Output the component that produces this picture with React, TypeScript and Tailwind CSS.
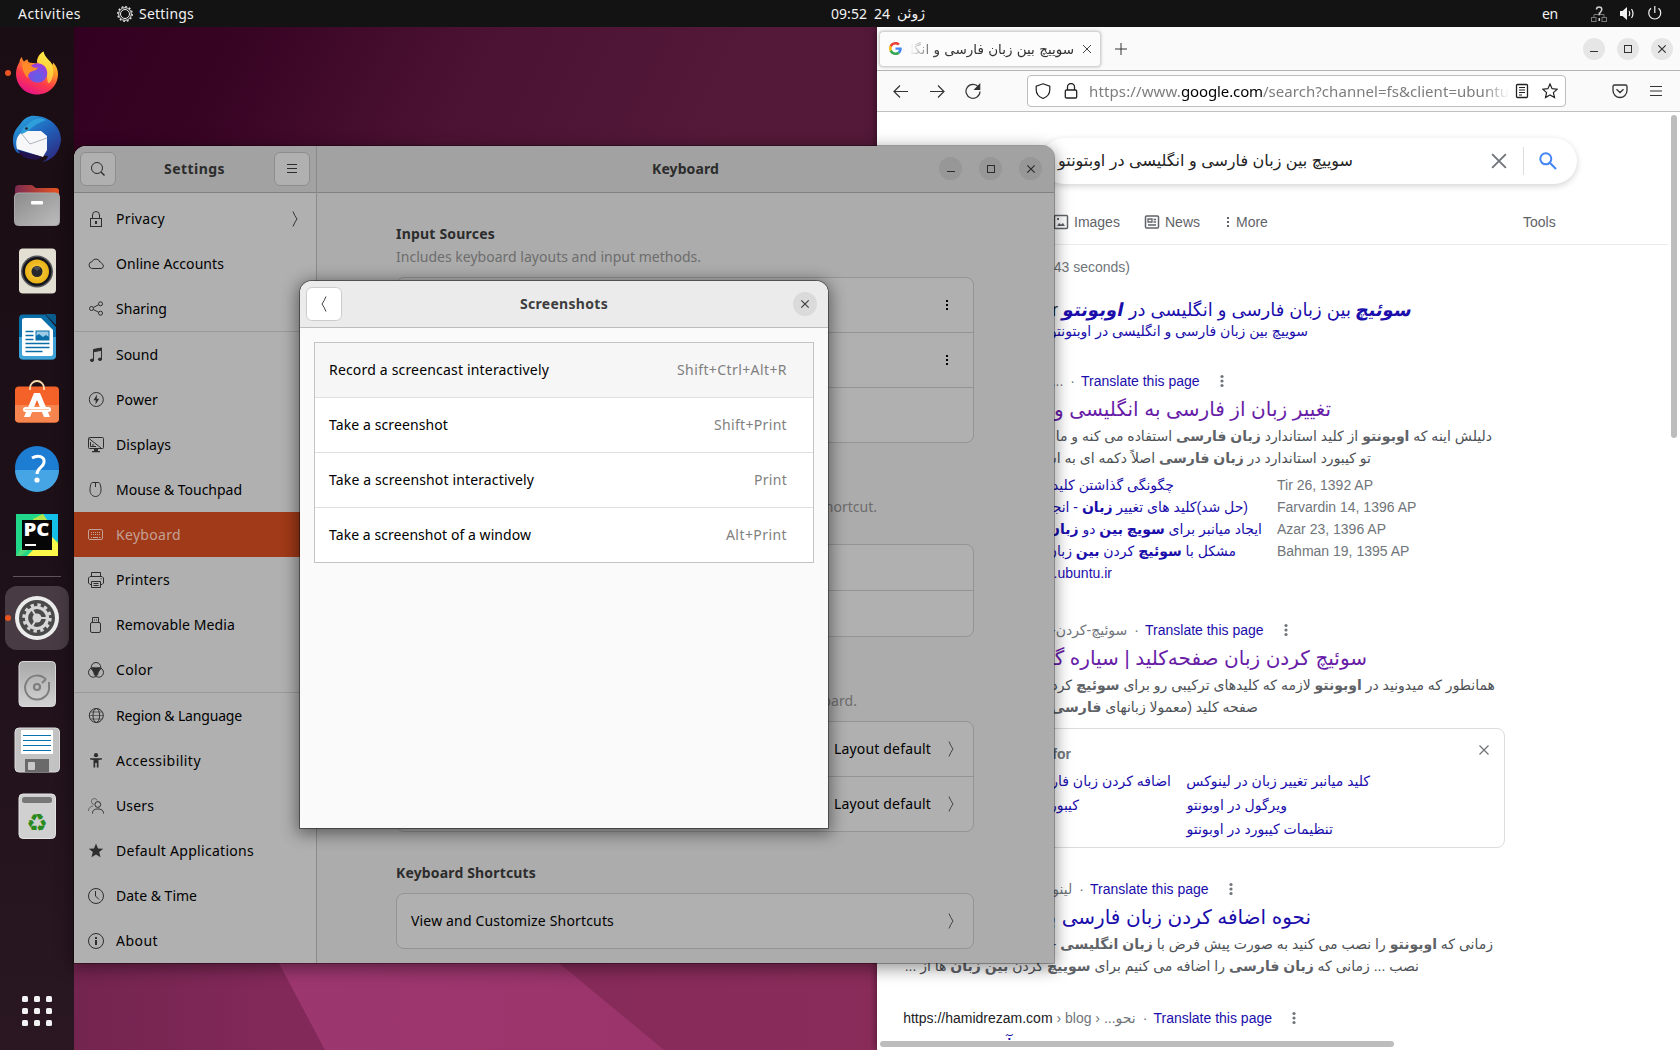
import React, { useLayoutEffect, useRef } from "react";

type FitProps = { w: number; className?: string; children: React.ReactNode };

/* Inline label whose tracking is adjusted so that it spans exactly w pixels. */
function Fit({ w, className = "", children }: FitProps) {
  const ref = useRef<HTMLSpanElement>(null);
  useLayoutEffect(() => {
    const el = ref.current;
    if (!el) return;
    el.style.letterSpacing = "0px";
    const n = (el.textContent || "").length;
    el.style.letterSpacing = (w - el.getBoundingClientRect().width) / n + "px";
  }, [w]);
  return (
    <span ref={ref} className={"inline-block shrink-0 whitespace-pre " + className}>
      {children}
    </span>
  );
}

/* ---------- small line icons (16px grid) ---------- */

function Line({ children, className = "size-4", sw = 1 }: { children: React.ReactNode; className?: string; sw?: number }) {
  return (
    <svg viewBox="0 0 16 16" className={"shrink-0 " + className} fill="none" stroke="currentColor" strokeWidth={sw}>
      {children}
    </svg>
  );
}

const Chevron = ({ flip = false }: { flip?: boolean }) => (
  <svg viewBox="0 0 8 16" className={flip ? "h-4 w-2 -scale-x-100" : "h-4 w-2"} fill="none" stroke="currentColor" strokeWidth="1">
    <path d="M2 .5Q3.500 4.500 6 8Q3.500 11.500 2 15.500" />
  </svg>
);

const Dots = () => (
  <svg viewBox="0 0 4 12" className="h-3 w-1 shrink-0" fill="currentColor" shapeRendering="crispEdges">
    <rect x="1" y="1" width="2" height="2" />
    <rect x="1" y="5" width="2" height="2" />
    <rect x="1" y="9" width="2" height="2" />
  </svg>
);

const RoundDots = () => (
  <svg viewBox="0 0 4 14" className="h-[14px] w-1 shrink-0 text-[#70757a]" fill="currentColor">
    <circle cx="2" cy="2.500" r="1.600" />
    <circle cx="2" cy="7" r="1.600" />
    <circle cx="2" cy="11.500" r="1.600" />
  </svg>
);

const MinGlyph = () => <Line><path d="M4 10.500h8" /></Line>;
const MaxGlyph = () => <Line><rect x="4.500" y="4.500" width="7" height="7" /></Line>;
const CloseGlyph = () => <Line sw={1.2}><path d="M4.300 4.300l7.400 7.400M11.700 4.300l-7.400 7.400" /></Line>;

const icons: Record<string, React.ReactNode> = {
  Privacy: (
    <Line>
      <rect x="2.500" y="7.500" width="11" height="8" />
      <path d="M4.500 7.500V4a3.500 3.500 0 0 1 7 0v3.500" />
      <path d="M8 10v3" strokeWidth="2" />
    </Line>
  ),
  "Online Accounts": (
    <Line>
      <path d="M3.800 12.500H13a2.500 2.500 0 0 0 .9-4.800C13.500 6.500 12.600 6 11.800 6A4 4 0 0 0 4.200 5.600 3.500 3.500 0 0 0 3.800 12.500z" />
    </Line>
  ),
  Sharing: (
    <Line>
      <circle cx="3.500" cy="7.500" r="2" />
      <circle cx="12.500" cy="2.800" r="2" />
      <circle cx="12.500" cy="12.200" r="2" />
      <path d="M5.300 6.500l5.400-2.800M5.300 8.500l5.400 2.800" />
    </Line>
  ),
  Sound: (
    <Line>
      <path d="M5.500 13V2.500L13.500 1v11" />
      <path d="M5.500 2.800l8-1.500v2l-8 1.500z" fill="currentColor" />
      <ellipse cx="4" cy="13.300" rx="1.600" ry="1.200" fill="currentColor" />
      <ellipse cx="12" cy="12.300" rx="1.600" ry="1.200" fill="currentColor" />
    </Line>
  ),
  Power: (
    <Line>
      <circle cx="8.300" cy="7.500" r="7" />
      <path d="M9 2.500L5.500 8.300h2.300L7.500 12.500l3.700-5.800H8.700z" fill="currentColor" stroke="none" />
    </Line>
  ),
  Displays: (
    <Line>
      <rect x="0.500" y="0.500" width="15" height="11" rx="1" />
      <path d="M1 1.500l12 9.500M2.500 5v4.500h5.500M4 8h2" />
      <path d="M6 12h4v2h2v1.200H4V14h2z" fill="currentColor" stroke="none" />
    </Line>
  ),
  "Mouse & Touchpad": (
    <Line>
      <path d="M4.300 .5h6.400c1.200 0 2.300 3.500 2.300 7.500 0 3.500-2 6.500-5.500 6.500S2 11.500 2 8C2 4 3.100.5 4.300.5zM7.500 .5V5" />
    </Line>
  ),
  Keyboard: (
    <Line>
      <rect x="0.500" y="2.500" width="14" height="10" rx="1.500" />
      <path d="M3 5.500h10M3 7.500h10" strokeDasharray="1 1" />
      <path d="M3 10.500h1M5 10.500h5M11 10.500h1.500" />
    </Line>
  ),
  Printers: (
    <Line>
      <path d="M3.500 4.500v-4h9v4M3.500 12.500H2L.5 11V6L2 4.500h12L15.500 6v5L14 12.500h-1.500" />
      <path d="M3.500 9.500v6h9v-6zM5.500 11.500h5M5.500 13.500h5" />
      <path d="M12.500 6.800h1" />
    </Line>
  ),
  "Removable Media": (
    <Line>
      <rect x="2.500" y="5.500" width="10" height="10" rx="1.500" />
      <path d="M4.500 5.500v-5h6v5M6 3h1M8 3h1" />
    </Line>
  ),
  Color: (
    <Line>
      <circle cx="8" cy="5.300" r="4.800" />
      <circle cx="5.300" cy="10.400" r="4.800" />
      <circle cx="10.700" cy="10.400" r="4.800" />
      <path d="M3.800 6.200c2-1 6.400-1 8.400 0-.3 2-1 3-1.800 3.800-.3 2-1.200 3.300-2.400 4-1.200-.7-2.100-2-2.400-4-.8-.8-1.500-1.800-1.800-3.800z" fill="currentColor" stroke="none" />
    </Line>
  ),
  "Region & Language": (
    <Line>
      <circle cx="8.300" cy="7.500" r="7" />
      <ellipse cx="8.300" cy="7.500" rx="3.300" ry="7" />
      <path d="M1.300 7.500h14M2.500 4h11.600M2.500 11h11.600" strokeWidth=".6" />
    </Line>
  ),
  Accessibility: (
    <svg viewBox="0 0 16 16" className="size-4 shrink-0" fill="currentColor">
      <circle cx="8" cy="2.200" r="2.100" />
      <path d="M2 5.200h12v1.200l-3.500.6v7.500H8.800V10H7.200v4.500H5.500V7L2 6.400z" />
    </svg>
  ),
  Users: (
    <Line>
      <g opacity=".55"><path d="M6 6.500a3 3 0 1 1 3.200-4M.5 13C.5 10 2 8.500 5 8" /></g>
      <circle cx="9.800" cy="6.500" r="2.900" />
      <path d="M4.500 15.500c0-3.500 2-4.500 5.300-4.500s5.700 1 5.700 4.500" />
    </Line>
  ),
  "Default Applications": (
    <svg viewBox="0 0 16 16" className="size-4 shrink-0" fill="currentColor">
      <path d="M8 .5l2 4.900 5.200.3-4 3.400 1.300 5.100L8 11.400l-4.500 2.800 1.300-5.100L.8 5.700 6 5.400z" />
    </svg>
  ),
  "Date & Time": (
    <Line>
      <circle cx="8" cy="8" r="7.500" />
      <path d="M7.500 3v5l3.500 3.500" />
    </Line>
  ),
  About: (
    <Line>
      <circle cx="8" cy="8" r="7.500" />
      <path d="M8 4v2M8 7v5" strokeWidth="2" />
    </Line>
  ),
};

const groups: [string, number][][] = [
  [["Privacy", 49], ["Online Accounts", 108], ["Sharing", 51]],
  [["Sound", 42], ["Power", 42], ["Displays", 55], ["Mouse & Touchpad", 126], ["Keyboard", 65], ["Printers", 54], ["Removable Media", 119], ["Color", 37]],
  [["Region & Language", 126], ["Accessibility", 85], ["Users", 38], ["Default Applications", 138], ["Date & Time", 81], ["About", 42]],
];

/* ---------- top bar ---------- */

function TopBar() {
  return (
    <header className="relative z-10 flex h-[27px] items-center bg-[#131313] pr-[17px] pl-[18px] text-[14px] text-[#f2f2f2]">
      <Fit w={63}>Activities</Fit>
      <svg viewBox="0 0 16 16" className="ml-9 size-4 text-[#f2f2f2]" fill="none" stroke="currentColor">
        <circle cx="8" cy="8" r="6.300" strokeWidth="1" />
        <circle cx="8" cy="8" r="7.300" strokeWidth="1.200" strokeDasharray="1.900 1.922" />
        <circle cx="8" cy="8" r="4.500" strokeWidth="1" />
      </svg>
      <Fit w={55} className="ml-[6px]">Settings</Fit>
      <div className="ml-[637px] flex items-center">
        <Fit w={36}>09:52</Fit>
        <Fit w={16} className="ml-[7px]">24</Fit>
        <span dir="rtl" className="ml-[5px] w-[30px] whitespace-nowrap font-['DejaVu_Sans'] text-[14px]">ژوئن</span>
      </div>
      <Fit w={16} className="ml-auto">en</Fit>
      <svg viewBox="0 0 16 16" className="ml-[33px] size-4" fill="none" stroke="#777">
        <path d="M8 6v4M3 11.500V8.500h10v3" />
        <rect x="0.500" y="11.500" width="4.500" height="4" />
        <rect x="11" y="11.500" width="4.500" height="4" />
        <path d="M5.500 3.500C5.500.3 10.800.3 10.800 3.500c0 2.300-2.500 2.300-2.500 5.500M8.300 12v3" stroke="#cfcfcf" strokeWidth="1.500" />
      </svg>
      <svg viewBox="0 0 16 16" className="ml-3 size-4" fill="none" stroke="#f2f2f2">
        <path d="M1 5h2.500L8 1v13L3.500 10H1z" fill="#f2f2f2" stroke="none" />
        <path d="M10 5q1.500 2.500 0 5M12.500 3q3 4.500 0 9" strokeWidth="1.200" />
      </svg>
      <svg viewBox="0 0 16 16" className="ml-3 size-4" fill="none" stroke="#f2f2f2" strokeWidth="1.200">
        <path d="M4 2.300a6 6 0 1 0 7.500 0M7.800 0v7" />
      </svg>
    </header>
  );
}

/* ---------- dock ---------- */

const Svg48 = ({ children }: { children: React.ReactNode }) => (
  <svg viewBox="0 0 48 48" className="size-12">{children}</svg>
);

const dockIcons: React.ReactNode[] = [
  <Svg48 key="firefox">
    <defs>
      <linearGradient id="ffA" x1=".8" y1="0" x2=".3" y2="1">
        <stop offset="0" stopColor="#fff44f" />
        <stop offset=".35" stopColor="#ff9a24" />
        <stop offset=".65" stopColor="#ff3d47" />
        <stop offset="1" stopColor="#e6128a" />
      </linearGradient>
      <radialGradient id="ffB" cx=".5" cy=".7" r=".7">
        <stop offset="0" stopColor="#5a63e8" />
        <stop offset="1" stopColor="#a33adb" />
      </radialGradient>
    </defs>
    <path d="M24 45.500C12 45.500 3 36 3 24.500c0-5 2-9 3.500-11.500 0-2.500 1.500-4 2.500-5 0 2 .8 3.200 2 4.500 1.500-1.200 2.600-2.500 3.500-2 .3 1.500.7 2 1.500 3l8 1C23.500 9.500 26 5 30.500 2.500c1 4.500 3 6 5.500 9 2 2 3 3 3.500 4.500.5-1 .6-1.700.6-2.500C43.500 17 45 21 45 25c0 12-9.500 20.500-21 20.500z" fill="url(#ffA)" />
    <path d="M30.500 2.500c1 4.500 3 6 5.500 9 4.500 5 6.500 14 1 22-4 3-2-8-4-13l-9-8C25 8.500 27 5 30.500 2.500z" fill="#fff04a" opacity=".65" />
    <circle cx="24.500" cy="24" r="9.800" fill="url(#ffB)" />
    <path d="M9 14c3 0 5 0 8 1.500 2.500 3.500 5 3.500 8 3-1 2.500-3 3-5 3.500-4 1-5.500 4-4.500 7.500C11 26 9 20 9 14z" fill="#ff8a2a" />
  </Svg48>,
  <Svg48 key="thunderbird">
    <defs>
      <linearGradient id="tb" x1="0" y1="0" x2=".7" y2="1">
        <stop offset="0" stopColor="#2caee2" />
        <stop offset=".5" stopColor="#1f66be" />
        <stop offset="1" stopColor="#2d2f86" />
      </linearGradient>
    </defs>
    <path d="M8 8C12 2 18 0 23 1c10 0 25 8 25 24-1 12-9 21-19 22 4-2 5-3 6-6L5 38C-1 34-2 20 4 13z" fill="url(#tb)" />
    <path d="M13 16h15l6 5v14l-4 7L4 34C2 26 4 21 8 18z" fill="#f7f7f9" />
    <path d="M5 35l24 7-3 2C15 46 8 42 5 35z" fill="#22134f" />
    <path d="M8 18l9 11 17-6" fill="none" stroke="#aeb3bb" />
    <path d="M14 10c5-6 12-8 19-5-6 2-12 5-18 11-3 1-5 3-7 3 0-4 2-7 6-9z" fill="#2f9fdc" />
    <circle cx="13.500" cy="13.500" r="1.300" fill="#222" />
  </Svg48>,
  <Svg48 key="files">
    <defs>
      <linearGradient id="flA"><stop offset="0" stopColor="#7a2a50" /><stop offset="1" stopColor="#e95420" /></linearGradient>
      <linearGradient id="flB" x1="0" y1="0" x2="1" y2="1"><stop offset="0" stopColor="#8b8b8b" /><stop offset="1" stopColor="#bdbdbd" /></linearGradient>
    </defs>
    <path d="M2 8q0-4 4-4h12q2 0 3 1.500T24 7h19q3 0 3 3v10H2z" fill="url(#flA)" />
    <rect x="1.500" y="12" width="45" height="32.500" rx="4" fill="url(#flB)" stroke="#a9a9a9" />
    <rect x="18" y="20" width="12" height="3.500" rx="1" fill="#fff" />
  </Svg48>,
  <Svg48 key="rhythmbox">
    <defs><radialGradient id="rb"><stop offset="0" stopColor="#f9d24a" /><stop offset="1" stopColor="#e9b115" /></radialGradient></defs>
    <rect x="6" y="1.500" width="37" height="45" rx="4" fill="#e3dfd3" />
    <circle cx="24" cy="24.500" r="16" fill="#55555a" />
    <circle cx="24" cy="24.500" r="14.500" fill="#14141c" />
    <circle cx="24" cy="24.500" r="12" fill="url(#rb)" />
    <circle cx="24" cy="24.500" r="5.500" fill="#26282b" />
    <path d="M20 21a5.500 5.500 0 0 1 8 0l-4 3z" fill="#4b4e52" />
  </Svg48>,
  <Svg48 key="writer">
    <path d="M10 1.500h22L43 14v28.500q0 4-4 4H10q-4 0-4-4v-37q0-4 4-4z" fill="#0a6ea8" />
    <path d="M6 24h37v18.500q0 4-4 4H10q-4 0-4-4z" fill="#3fa3d8" />
    <path d="M12 5h16L40 17v24q0 2-2 2H11q-2 0-2-2V7q0-2 3-2z" fill="#fff" />
    <path d="M32 1h9q2 0 2 2v9z" fill="#0a5c8c" />
    <rect x="23" y="18" width="13" height="9" fill="#9ccbe6" stroke="#0a6ea8" />
    <path d="M23 27v-4l3-2 4 3 3-2 3 2v3z" fill="#0a6ea8" />
    <path d="M12.500 18.500h8M12.500 22.500h8M12.500 26.500h8M12.500 30.500h24M12.500 34.500h24M12.500 38.500h17" stroke="#0a6ea8" strokeWidth="1.600" />
  </Svg48>,
  <Svg48 key="software">
    <rect x="2" y="7.500" width="44" height="36" rx="4" fill="#f4622a" />
    <path d="M2 26h44v13.500q0 4-4 4H6q-4 0-4-4z" fill="#f6854f" />
    <path d="M17 11V9a7 7 0 0 1 14 0v2" fill="none" stroke="#fcdcae" strokeWidth="1.800" />
    <path d="M21 14h6l10 24h-6l-7-17-7 17h-6z" fill="#fff" />
    <rect x="10" y="28" width="28" height="5" rx="2.500" fill="#fff" />
    <path d="M12 30.500h24" stroke="#f6b18e" strokeWidth=".7" />
  </Svg48>,
  <Svg48 key="help">
    <circle cx="24" cy="23" r="22" fill="#1d7dd2" />
    <path d="M2 25a22 22 0 0 0 44 0z" fill="#46a5e4" />
    <path d="M19 13c6-3.500 13-1.500 12 4.500-.7 5-7 5-7 11.500" fill="none" stroke="#fff" strokeWidth="3" />
    <circle cx="24" cy="35" r="2.600" fill="#fff" />
  </Svg48>,
  <Svg48 key="pycharm">
    <rect x="3" y="3" width="42" height="42" fill="#21d789" />
    <path d="M30 3h15v26l-20 6z" fill="#14bfe8" />
    <path d="M3 45L30 3l5 10-10 18L8 45z" fill="#4fdc7c" />
    <path d="M20 8l10-5 5 7v20H20z" fill="#b8e64a" />
    <path d="M14 45l22-22 9 9v13z" fill="#fcf84a" />
    <rect x="9" y="9" width="30" height="30" fill="#060606" />
    <text x="10.500" y="25" fontSize="18" fontWeight="800" fill="#fff" fontFamily="Open Sans, sans-serif" textLength="26" lengthAdjust="spacingAndGlyphs">PC</text>
    <rect x="12" y="33" width="11" height="2" fill="#fff" />
  </Svg48>,
];

const runningIcons: React.ReactNode[] = [
  <Svg48 key="settings">
    <circle cx="24" cy="24" r="22" fill="#ececec" />
    <circle cx="24" cy="24" r="18" fill="#4a4a4a" />
    <circle cx="24" cy="24" r="13.200" fill="none" stroke="#d6d6d6" strokeWidth="3" strokeDasharray="3.400 3.510" />
    <circle cx="24" cy="24" r="10.500" fill="none" stroke="#d6d6d6" strokeWidth="3.200" />
    <circle cx="24" cy="24" r="4.500" fill="#d6d6d6" />
    <path d="M24 24h9M24 24l-5-8.500M24 24l-5 8.500" stroke="#d6d6d6" strokeWidth="2" />
  </Svg48>,
  <Svg48 key="disk">
    <defs><linearGradient id="dk" x1="0" y1="0" x2="0" y2="1"><stop offset="0" stopColor="#a8a8a8" /><stop offset="1" stopColor="#d2d2d2" /></linearGradient></defs>
    <rect x="6" y="1.500" width="36.500" height="45" rx="4" fill="url(#dk)" stroke="#d8d8d8" />
    <path d="M33 19.500A12 12 0 1 0 36 26V22M33 19l-4 4" fill="none" stroke="#7e7e7e" strokeWidth="2" />
    <circle cx="24" cy="27" r="3" fill="none" stroke="#7e7e7e" strokeWidth="2.200" />
  </Svg48>,
  <Svg48 key="floppy">
    <rect x="2" y="2" width="44.500" height="44" rx="4" fill="#c3c3c3" stroke="#ddd" />
    <rect x="8" y="4" width="32" height="24" rx="1" fill="#fff" />
    <path d="M10 9.500h28M10 14.500h28M10 19.500h28M10 24.500h28" stroke="#0a72ae" strokeWidth="1" />
    <path d="M12 33h24v13H12z" fill="#6a6a6a" />
    <rect x="15" y="36" width="7" height="8" rx="1" fill="#c9c9c9" />
  </Svg48>,
  <Svg48 key="trash">
    <rect x="6" y="2" width="36.500" height="44.500" rx="4" fill="#d0d0d0" stroke="#e4e4e4" />
    <rect x="9" y="5" width="30" height="6" rx="2.500" fill="#777" />
    <text x="24" y="38.500" textAnchor="middle" fontSize="24" fill="#2a8a1e" fontFamily="DejaVu Sans, sans-serif">♻</text>
  </Svg48>,
];

function DockSlot({ children, running = false, active = false }: { children: React.ReactNode; running?: boolean; active?: boolean }) {
  return (
    <div className="relative flex h-[66px] items-center justify-center">
      <div className={"flex size-16 items-center justify-center rounded-[12px] " + (active ? "bg-[#493b43]" : "")}>{children}</div>
      {running && <span className="absolute top-[30px] left-[5px] size-[6px] rounded-full bg-[#e95420]" />}
    </div>
  );
}

function Dock() {
  return (
    <nav className="flex w-[74px] shrink-0 flex-col bg-linear-to-b from-[#1a0d13] via-[#1d1018] to-[#2a1721] pt-[13px]">
      {dockIcons.map((icon, i) => (
        <DockSlot key={i} running={i === 0}>{icon}</DockSlot>
      ))}
      <div className="flex h-[17px] items-center justify-center"><div className="h-px w-12 bg-[#5e555a]" /></div>
      {runningIcons.map((icon, i) => (
        <DockSlot key={i} running={i === 0} active={i === 0}>{icon}</DockSlot>
      ))}
      <div className="mx-auto mt-[147px] grid grid-cols-3 gap-[6px]">
        {Array.from({ length: 9 }, (_, i) => (
          <span key={i} className="size-[6px] rounded-[1.500px] bg-[#f2f2f2]" />
        ))}
      </div>
    </nav>
  );
}

/* ---------- browser ---------- */

const Fa = ({ children, className = "" }: { children: React.ReactNode; className?: string }) => (
  <span dir="rtl" className={"shrink-0 whitespace-nowrap " + className}>{children}</span>
);

/* Bold slanted word; the slant is applied to the upright bold face. */
const Slanted = ({ children }: { children: React.ReactNode }) => (
  <em className="inline-block -skew-x-12 font-bold not-italic">{children}</em>
);

/* A line of the results column; its content ends at the given width. */
function ResultLine({ children, className }: { children: React.ReactNode; className: string }) {
  return <div className={"flex h-[22px] shrink-0 items-center justify-end whitespace-nowrap " + className}>{children}</div>;
}

const Translate = () => (
  <>
    <span className="pr-[6px] pl-[7px]">·</span>
    <span className="w-[119px] text-[#1a0dab]">Translate this page</span>
    <span className="ml-[20px] flex"><RoundDots /></span>
  </>
);

function RoundButton({ children, className }: { children: React.ReactNode; className: string }) {
  return <span className={"flex items-center justify-center rounded-full " + className}>{children}</span>;
}

function Browser() {
  return (
    <section className="absolute top-[27px] left-[877px] flex h-[1023px] w-[803px] flex-col overflow-hidden bg-white shadow-[0_0_8px_rgba(0,0,0,0.5)]">
      <div className="flex h-[44px] shrink-0 items-center border-b border-[#b4b4b4] bg-[#fafafa] pr-[7px] pl-[2px]">
        <div className="flex h-[36px] w-[222px] items-center rounded-[4px] border border-[#d4d4d4] bg-[#fcfcfc] px-[9px] shadow-[0_0_3px_rgba(0,0,0,0.25)]">
          <svg viewBox="0 0 48 48" className="size-[13px] shrink-0">
            <path fill="#EA4335" d="M24 9.500c3.540 0 6.710 1.220 9.210 3.600l6.850-6.850C35.900 2.380 30.470 0 24 0 14.620 0 6.510 5.380 2.560 13.220l7.980 6.190C12.430 13.720 17.740 9.500 24 9.500z" />
            <path fill="#4285F4" d="M46.980 24.550c0-1.570-.15-3.090-.38-4.550H24v9.020h12.940c-.58 2.960-2.260 5.480-4.780 7.180l7.730 6c4.510-4.180 7.090-10.360 7.090-17.650z" />
            <path fill="#FBBC05" d="M10.530 28.590c-.48-1.450-.76-2.990-.76-4.590s.27-3.140.76-4.590l-7.980-6.190C.92 16.460 0 20.120 0 24c0 3.880.92 7.540 2.560 10.780l7.970-6.190z" />
            <path fill="#34A853" d="M24 48c6.480 0 11.930-2.130 15.890-5.810l-7.730-6c-2.150 1.450-4.920 2.300-8.160 2.300-6.260 0-11.570-4.220-13.470-9.910l-7.980 6.190C6.510 42.620 14.620 48 24 48z" />
          </svg>
          <div className="mt-[2px] ml-2 flex w-[164px] shrink-0 justify-start overflow-hidden text-[13px] text-[#333] [direction:rtl] [mask-image:linear-gradient(to_right,transparent,black_28px)]">
            <Fa className="font-['DejaVu_Sans'] text-[13.500px]">سوییچ بین زبان فارسی و انگلیسی</Fa>
          </div>
          <span className="ml-[5px] text-[#444]"><Line className="size-4"><path d="M4 4l8 8M12 4l-8 8" /></Line></span>
        </div>
        <span className="mt-[1px] ml-[12px] text-[#333]"><Line className="size-4"><path d="M8 2v12M2 8h12" /></Line></span>
        <div className="ml-auto flex gap-3 pt-px text-[#333]">
          <RoundButton className="size-[22px] bg-[#e6e6e6]"><MinGlyph /></RoundButton>
          <RoundButton className="size-[22px] bg-[#e6e6e6]"><MaxGlyph /></RoundButton>
          <RoundButton className="size-[22px] bg-[#e6e6e6]"><CloseGlyph /></RoundButton>
        </div>
      </div>
      <div className="flex h-[41px] shrink-0 items-center border-b border-[#c0c0c0] bg-[#fafafa] pr-[16px] pl-4 text-[#333]">
        <Line sw={1.2}><path d="M1 8.500h14M7 2.500L1 8.500l6 6" /></Line>
        <span className="ml-5"><Line sw={1.2}><path d="M1 8.500h14M9 2.500l6 6-6 6" /></Line></span>
        <span className="ml-5"><Line sw={1.2}><path d="M13.500 4A7 7 0 1 0 15 8.500" /><path d="M14.700 1.500v4.800h-4.800z" fill="currentColor" /></Line></span>
        <div className="ml-[46px] flex h-8 w-[539px] items-center rounded-[4px] border border-[#bdbdbd] bg-white pr-[6px] pl-[7px] text-[#222]">
          <Line sw={1.2}><path d="M8 .8l6.800 2.400v3.600C14.800 11 12 14 8 15.500 4 14 1.200 11 1.200 6.800V3.200z" /></Line>
          <span className="ml-3"><Line sw={1.3}><rect x="2.300" y="7" width="11.400" height="8" rx="1.200" /><path d="M4.500 7V4a3.500 3.500 0 0 1 7 0v3" /></Line></span>
          <div className="ml-[10px] w-[420px] overflow-hidden text-[15px] whitespace-nowrap text-[#7d7d7d] [mask-image:linear-gradient(to_left,transparent,black_24px)]">
            <Fit w={92}>https://www.</Fit>
            <Fit w={82} className="text-black">google.com</Fit>
            <Fit w={246}>/search?channel=fs&amp;client=ubuntu</Fit>
          </div>
          <span className="ml-[5px]"><Line sw={1.3}><rect x="2.500" y="1.500" width="11" height="13" rx="1" /><path d="M5 4.500h6M5 7h6M5 9.500h6M5 12h3" strokeWidth="1" /></Line></span>
          <span className="ml-3"><Line sw={1.2}><path d="M8 1l2.100 4.700 5.100.5-3.800 3.400 1.100 5L8 12l-4.500 2.600 1.100-5L.8 6.200l5.100-.5z" /></Line></span>
        </div>
        <span className="ml-auto"><Line sw={1.3}><path d="M2.500 2h11q1.500 0 1.500 1.500V7.500a7 7 0 0 1-14 0V3.500Q1 2 2.500 2zM4.500 6.200L8 9.500l3.500-3.300" /></Line></span>
        <span className="ml-5"><Line sw={1.2}><path d="M2 3.500h12M2 8h12M2 12.500h12" /></Line></span>
      </div>

      <div className="flex min-h-0 flex-1 font-['Liberation_Sans','DejaVu_Sans',sans-serif] text-[14px] leading-[22px] text-[#70757a]">
        <main className="flex h-[928px] w-[791px] flex-col overflow-hidden pl-[29px]">
          <div className="mt-[26px] ml-[135px] flex h-[46px] w-[536px] shrink-0 items-center rounded-full bg-white pl-[17px] text-[16px] text-[#222] shadow-[0_2px_6px_rgba(32,33,36,0.2)]">
            <Fa className="w-[295px]">سوییچ بین زبان فارسی و انگلیسی در اوبتونتو</Fa>
            <span className="ml-[136px] text-[#70757a]"><Line className="size-[20px]" sw={1.5}><path d="M2.500 2.500l11 11M13.500 2.500l-11 11" /></Line></span>
            <span className="ml-[14px] h-7 w-px bg-[#dadce0]" />
            <svg viewBox="0 0 18 18" className="ml-[15px] size-[18px]" fill="none" stroke="#4285f4" strokeWidth="2">
              <circle cx="6.800" cy="6.800" r="5.500" />
              <path d="M10.800 10.800l6.200 6.200" />
            </svg>
          </div>
          <div className="mt-[27px] flex h-[22px] shrink-0 items-center pl-[147px] text-[#5f6368]">
            <Line sw={1.5}><rect x="1.500" y="1.500" width="13" height="13" rx="1" /><path d="M4 12l2-3 2 1.500L10 9l2 3z" fill="currentColor" stroke="none" /><rect x="4" y="4" width="2" height="2" fill="currentColor" stroke="none" /></Line>
            <span className="ml-[5px] w-[46px]">Images</span>
            <span className="ml-[24px]"><Line sw={1.5}><rect x="1.500" y="2" width="13" height="12" rx="1" /><path d="M4 5h4v3H4zM9.500 5.500H12M9.500 8H12M4 11h8" strokeWidth="1.300" /></Line></span>
            <span className="ml-[5px] w-[36px]">News</span>
            <span className="ml-[25px] flex"><Dots /></span>
            <span className="ml-[6px] w-[33px]">More</span>
            <span className="ml-auto w-[145px]">Tools</span>
          </div>
          <div className="mt-[11px] -ml-[29px] h-px shrink-0 bg-[#ebebeb]" />
          <ResultLine className="mt-[11px] w-[224px]">About 12,400 results (0.43 seconds)</ResultLine>
          <ResultLine className="mt-[21px] h-[21px] w-[506px] text-[18px] text-[#202124]">
            Showing results for&nbsp;
            <Fa className="text-[#1a0dab]"><Slanted>سوئیچ</Slanted> بین زبان فارسی و انگلیسی در <Slanted>اوبونتو</Slanted></Fa>
          </ResultLine>
          <ResultLine className="-mt-px w-[402px]">
            <Fa className="text-[#1a0dab]">سوییچ بین زبان فارسی و انگلیسی در اوبتونتو</Fa>
          </ResultLine>

          <ResultLine className="mt-[28px] w-[318px]">...<Translate /></ResultLine>
          <ResultLine className="mt-[6px] w-[425px] text-[20px] text-[#681da8]"><Fa>تغییر زبان از فارسی به انگلیسی و برعکس</Fa></ResultLine>
          <ResultLine className="mt-[5px] w-[586px] text-[#4d5156]">
            <Fa>دلیلش اینه که <b className="text-[#5f6368]">اوبونتو</b> از کلید استاندارد <b className="text-[#5f6368]">زبان فارسی</b> استفاده می کنه و ما</Fa>
          </ResultLine>
          <ResultLine className="w-[465px] text-[#4d5156]">
            <Fa>تو کیبورد استاندارد در <b className="text-[#5f6368]">زبان فارسی</b> اصلاً دکمه ای به اسم</Fa>
          </ResultLine>
          <div className="mt-[5px] grid shrink-0 grid-cols-[371px_auto]">
            <ResultLine className="w-[268px] text-[#1a0dab]"><Fa>چگونگی گذاشتن کلید</Fa></ResultLine>
            <span>Tir 26, 1392 AP</span>
            <ResultLine className="w-[342px] text-[#1a0dab]"><Fa className="[direction:ltr]"><bdi>کلید های تغییر <b>زبان</b> - انجمن</bdi><bdi>(حل شد)</bdi></Fa></ResultLine>
            <span>Farvardin 14, 1396 AP</span>
            <ResultLine className="w-[356px] text-[#1a0dab]"><Fa>ایجاد میانبر برای <b>سویچ بین</b> دو <b>زبان</b></Fa></ResultLine>
            <span>Azar 23, 1396 AP</span>
            <ResultLine className="w-[330px] text-[#1a0dab]"><Fa>مشکل با <b>سوئیچ</b> کردن <b>بین</b> زبان</Fa></ResultLine>
            <span>Bahman 19, 1395 AP</span>
            <ResultLine className="w-[206px] text-[#1a0dab]">forum.ubuntu.ir</ResultLine>
          </div>

          <ResultLine className="mt-[35px] w-[382px]"><Fa>سوئیچ-کردن-<bdi>زبان</bdi></Fa><Translate /></ResultLine>
          <ResultLine className="mt-[6px] w-[461px] text-[20px] text-[#681da8]"><Fa>سوئیچ کردن زبان صفحه‌کلید | سیاره گنو</Fa></ResultLine>
          <ResultLine className="mt-[5px] w-[589px] text-[#4d5156]">
            <Fa>همانطور که میدونید در <b className="text-[#5f6368]">اوبونتو</b> لازمه که کلیدهای ترکیبی رو برای <b className="text-[#5f6368]">سوئیچ</b> کردن</Fa>
          </ResultLine>
          <ResultLine className="w-[352px] text-[#4d5156]"><Fa>صفحه کلید (معمولا زبانهای <b className="text-[#5f6368]">فارسی</b></Fa></ResultLine>

          <div className="mt-[10px] -ml-px h-[120px] w-[600px] shrink-0 rounded-[8px] border border-[#dadce0]">
            <div className="flex items-start pt-[10px]">
              <ResultLine className="mt-[4px] w-[165px] text-[14px] font-bold text-[#70757a]">People also search for</ResultLine>
              <span className="mt-[3px] mr-[12px] ml-auto text-[#70757a]"><Line className="size-4" sw={1.3}><path d="M3.500 3.500l9 9M12.500 3.500l-9 9" /></Line></span>
            </div>
            <div className="mt-[5px] grid auto-rows-[24px] grid-cols-[282px_auto] text-[#1a0dab]">
              <ResultLine className="w-[265px]"><Fa>اضافه کردن زبان فارسی</Fa></ResultLine>
              <ResultLine className="w-[182px]"><Fa>کلید میانبر تغییر زبان در لینوکس</Fa></ResultLine>
              <ResultLine className="w-[173px]"><Fa>کیبورد</Fa></ResultLine>
              <ResultLine className="w-[99px]"><Fa>ویرگول در اوبونتو</Fa></ResultLine>
              <span />
              <ResultLine className="w-[145px]"><Fa>تنظیمات کیبورد در اوبونتو</Fa></ResultLine>
            </div>
          </div>

          <ResultLine className="mt-[30px] w-[327px]"><Fa>لینوکس</Fa><Translate /></ResultLine>
          <ResultLine className="mt-[6px] w-[405px] text-[20px] text-[#1a0dab]"><Fa>نحوه اضافه کردن زبان فارسی به</Fa></ResultLine>
          <ResultLine className="mt-[5px] w-[587px] text-[#4d5156]">
            <Fa>زمانی که <b className="text-[#5f6368]">اوبونتو</b> را نصب می کنید به صورت پیش فرض با <b className="text-[#5f6368]">زبان انگلیسی</b> -</Fa>
          </ResultLine>
          <ResultLine className="w-[513px] text-[#4d5156]">
            <Fa>نصب ... زمانی که <b className="text-[#5f6368]">زبان فارسی</b> را اضافه می کنیم برای <b className="text-[#5f6368]">سوییچ</b> کردن <b className="text-[#5f6368]">بین زبان</b> ها از ...</Fa>
          </ResultLine>

          <ResultLine className="mt-[30px] w-[390px]">
            <span className="text-[#202124]">https://hamidrezam.com</span>
            <span className="whitespace-pre"> › blog › ...</span><Fa>نحو</Fa><Translate />
          </ResultLine>
          <div className="mt-[6px] w-[106px] text-right text-[20px] text-[#1a0dab]">آ</div>
        </main>
        <div className="w-3 pt-[3px]"><div className="ml-[3px] h-[323px] w-[6px] rounded-full bg-[#bdbdbd]" /></div>
      </div>
      <div className="relative mb-[3px] ml-[3px] h-[6px] w-[514px] shrink-0 rounded-full bg-[#bdbdbd]" />
    </section>
  );
}

/* ---------- settings window ---------- */

const card = "rounded-[8px] border border-[#949494] bg-[#b0b0b0] divide-y divide-[#949494]";

function Settings() {
  return (
    <section className="absolute top-[146px] left-[74px] flex h-[817px] w-[980px] overflow-hidden rounded-t-[12px] bg-[#acacac] text-[14px] text-black shadow-[0_0_0_1px_rgba(0,0,0,0.3),0_4px_16px_2px_rgba(0,0,0,0.4)]">
      <aside className="flex w-[243px] shrink-0 flex-col border-r border-[#8b8b8b] bg-[#b0b0b0]">
        <div className="flex h-[47px] shrink-0 items-center border-b border-[#828282] bg-[#a2a2a2] pr-[6px] pb-px pl-[6px] text-[#2c2c2c]">
          <span className="mt-px flex h-[34px] w-9 items-center justify-center rounded-[6px] border border-[#8d8d8d] bg-[#b0b0b0]">
            <Line><circle cx="7" cy="7" r="5.500" /><path d="M11 11l3.500 3.500" strokeWidth="1.400" /></Line>
          </span>
          <Fit w={61} className="ml-[48px] font-bold">Settings</Fit>
          <span className="mt-px ml-auto flex h-[34px] w-9 items-center justify-center rounded-[6px] border border-[#8d8d8d] bg-[#b0b0b0]">
            <Line><path d="M3 3.500h10M3 7.500h10M3 11.500h10" /></Line>
          </span>
        </div>
        <div className="pt-[3px]">
          {groups.map((items, g) => (
            <ul key={g} className={g > 0 ? "border-t border-[#9a9a9a]" : ""}>
              {items.map(([label, w]) => (
                <li key={label} className={"flex h-[45px] items-center pr-[17px] pl-[14px] " + (label === "Keyboard" ? "bg-[#a13a18] text-[#c3a197]" : "")}>
                  <span className={label === "Keyboard" ? "" : "text-[#2e2e2e]"}>{icons[label]}</span>
                  <Fit w={w} className="ml-3">{label}</Fit>
                  {label === "Privacy" && <span className="ml-auto text-[#333]"><Chevron /></span>}
                </li>
              ))}
            </ul>
          ))}
        </div>
      </aside>
      <div className="flex flex-1 flex-col">
        <div className="flex h-[47px] shrink-0 items-center border-b border-[#828282] bg-[#a2a2a2] pr-3 pb-px text-[#2c2c2c]">
          <Fit w={67} className="ml-[335px] font-bold">Keyboard</Fit>
          <div className="ml-auto flex gap-[17px]">
            <RoundButton className="size-[23px] bg-[#979797]"><MinGlyph /></RoundButton>
            <RoundButton className="size-[23px] bg-[#979797]"><MaxGlyph /></RoundButton>
            <RoundButton className="size-[23px] bg-[#979797]"><CloseGlyph /></RoundButton>
          </div>
        </div>
        <div className="flex w-[657px] flex-col pr-0 pl-[79px] leading-[22px]">
          <div className="mt-[30px] h-[22px] text-[#2c2c2c]"><Fit w={99} className="font-bold">Input Sources</Fit></div>
          <div className="mt-[1px] h-[22px] text-[#6d6d6d]"><Fit w={305}>Includes keyboard layouts and input methods.</Fit></div>
          <div className={"mt-[9px] h-[166px] " + card}>
            <div className="flex h-[55px] items-center justify-end pr-[24px]"><Dots /></div>
            <div className="flex h-[55px] items-center justify-end pr-[24px]"><Dots /></div>
            <div className="h-[54px]" />
          </div>
          <div className="mt-[53px] h-[22px] text-[#6d6d6d]"><Fit w={481}>Input sources can be switched using the Super+Space keyboard shortcut.</Fit></div>
          <div className={"mt-[26px] h-[93px] " + card}>
            <div className="h-[46px]" />
            <div className="h-[45px]" />
          </div>
          <div className="mt-[53px] h-[22px] text-[#6d6d6d]"><Fit w={461}>Methods for entering symbols and letter variants using the keyboard.</Fit></div>
          <div className={"mt-[9px] h-[111px] " + card}>
            {[0, 1].map((i) => (
              <div key={i} className={"flex items-center justify-end pr-[18px] " + (i === 0 ? "h-[55px]" : "h-[54px]")}>
                <Fit w={97}>Layout default</Fit>
                <span className="ml-[16px] text-[#444]"><Chevron /></span>
              </div>
            ))}
          </div>
          <div className="mt-[30px] h-[22px] text-[#2c2c2c]"><Fit w={140} className="font-bold">Keyboard Shortcuts</Fit></div>
          <div className={"mt-[9px] h-[56px] " + card}>
            <div className="flex h-[54px] items-center justify-between pr-[18px] pl-[14px]">
              <Fit w={203}>View and Customize Shortcuts</Fit>
              <span className="text-[#444]"><Chevron /></span>
            </div>
          </div>
        </div>
      </div>
    </section>
  );
}

/* ---------- shortcuts dialog ---------- */

const shortcuts: [string, number, string, number][] = [
  ["Record a screencast interactively", 220, "Shift+Ctrl+Alt+R", 110],
  ["Take a screenshot", 119, "Shift+Print", 73],
  ["Take a screenshot interactively", 205, "Print", 33],
  ["Take a screenshot of a window", 202, "Alt+Print", 61],
];

function Dialog() {
  return (
    <section className="absolute top-[281px] left-[300px] h-[547px] w-[528px] overflow-hidden rounded-t-[12px] bg-[#fafafa] text-[14px] text-black shadow-[0_0_0_1px_rgba(0,0,0,0.4),0_3px_16px_3px_rgba(0,0,0,0.45)]">
      <div className="flex h-[47px] items-center border-b border-[#bdbdbd] bg-[#ebebeb] pr-[11px] pb-px pl-[6px] text-[#3d3d3d]">
        <span className="mt-px flex h-[34px] w-9 items-center justify-center rounded-[6px] border border-[#cdcdcd] bg-white"><Chevron flip /></span>
        <Fit w={88} className="ml-[178px] font-bold">Screenshots</Fit>
        <RoundButton className="ml-auto size-6 bg-[#dadada]"><CloseGlyph /></RoundButton>
      </div>
      <ul className="mx-[14px] mt-[14px] divide-y divide-[#e0e0e0] border border-[#c4c4c4] bg-white">
        {shortcuts.map(([name, w, keys, kw], i) => (
          <li key={name} className={"flex items-center justify-between pr-[26px] pb-[2px] pl-[14px] " + (i === 0 ? "h-[55px] bg-[#f6f6f6]" : i === 3 ? "h-[54px]" : "h-[55px]")}>
            <Fit w={w}>{name}</Fit>
            <Fit w={kw} className="text-[#7f7f7f]">{keys}</Fit>
          </li>
        ))}
      </ul>
    </section>
  );
}

export default function App() {
  return (
    <div className="relative flex h-[1050px] w-[1680px] flex-col overflow-hidden bg-[#330022] font-['Noto_Sans','DejaVu_Sans',sans-serif]">
      <TopBar />
      <div className="flex min-h-0 flex-1">
        <Dock />
        <svg viewBox="0 0 1606 1023" className="h-[1023px] flex-1" preserveAspectRatio="none">
          <defs>
            <linearGradient id="wpA" gradientUnits="userSpaceOnUse" x1="0" y1="0" x2="560" y2="280">
              <stop offset="0" stopColor="#320020" />
              <stop offset=".25" stopColor="#380424" />
              <stop offset=".6" stopColor="#4c1233" />
              <stop offset="1" stopColor="#541939" />
            </linearGradient>
            <linearGradient id="wpB"><stop offset="0" stopColor="#73244f" /><stop offset=".13" stopColor="#83295a" /><stop offset=".5" stopColor="#8a2c5a" /></linearGradient>
            <linearGradient id="wpC"><stop offset="0" stopColor="#9d3770" /><stop offset="1" stopColor="#9a346a" /></linearGradient>
          </defs>
          <rect width="1606" height="700" fill="url(#wpA)" />
          <rect y="700" width="1606" height="323" fill="url(#wpB)" />
          <path d="M170 870L251 1023H590L405 870z" fill="url(#wpC)" />
        </svg>
      </div>
      <Browser />
      <Settings />
      <Dialog />
    </div>
  );
}
